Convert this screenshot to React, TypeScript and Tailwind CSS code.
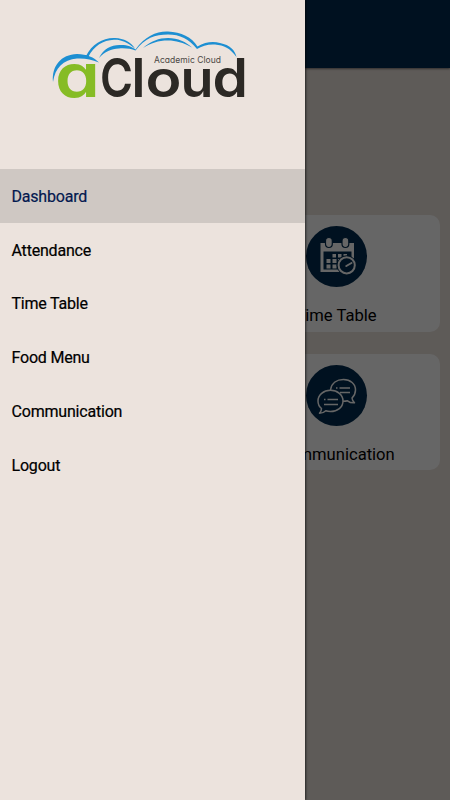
const menuItems = ['Dashboard', 'Attendance', 'Time Table', 'Food Menu', 'Communication', 'Logout'];

const Logo = () => (
  <svg width="200" height="84" viewBox="50 28 200 84" fill="none" className="ml-[50px] mt-7 overflow-visible">
    <g fill="#1d8fd2">
      <path d="M53 82C51.500 66 61 54.500 77 54C87 54 94 57.500 99 62.500C91 59.500 85 58 77 58.500C63 59.500 55 68 53 82Z" />
      <path d="M86 56C92 44 103 37.500 115 38C124 38.500 131 42 135 48.500C127 42 121 39.500 114 39.700C103 40 94 46 88.500 56.500Z" />
      <path d="M99 58C104 48 112 44.500 121 45C128 45 132 47 135.500 49.500C145 36 157 31 168 31.500C181 32 192 37 197.500 46.500C205 42 213 41 220 43C230 45 235 50 236.500 57C230 48 224 45.500 215 44.500C208 44 202 46 197 49C189 39 180 34.500 168 34.500C155 34.500 145 38 135.500 50.500C131 49 126 48 119 48.500C111 49 105 51.500 99 58Z" />
      <path d="M143 48C151 41 159 38 168 38C178 38 186 42 192 47.500C183 42.500 176 40.500 168 40.500C158 40.500 151 43 143 48Z" />
    </g>
    <text y="97" className="font-['Inter',sans-serif] font-semibold [font-feature-settings:'cv11']">
      <tspan x="55" fontSize="60" fill="#86bc25" textLength="45" lengthAdjust="spacingAndGlyphs">a</tspan>
      <tspan x="100" fontSize="54" fill="#2c2925" textLength="33" lengthAdjust="spacingAndGlyphs">C</tspan>
      <tspan x="131.500" fontSize="53" fill="#2c2925">l</tspan>
      <tspan x="145.500" fontSize="51" fill="#2c2925" textLength="36" lengthAdjust="spacingAndGlyphs">o</tspan>
      <tspan x="180.500" fontSize="51" fill="#2c2925" textLength="33" lengthAdjust="spacingAndGlyphs">u</tspan>
      <tspan x="212.500" fontSize="53" fill="#2c2925" textLength="35.500" lengthAdjust="spacingAndGlyphs">d</tspan>
    </text>
    <text
      x="154" y="62.500" fontSize="8.500" fill="#4b4744" textLength="67"
      className="font-['Inter',sans-serif] [font-feature-settings:'cv11']"
    >
      Academic Cloud
    </text>
  </svg>
);

const CalendarIcon = () => (
  <svg width="61" height="61" viewBox="0 0 61 61" fill="none">
    <path d="M14.500 17H48V46H14.500Z" fill="#fff" />
    <path d="M17.500 25.500H45.500V43.500H17.500Z" fill="#022c50" />
    <g fill="#fff" stroke="#022c50" strokeWidth="1.200">
      <rect x="19.500" y="11.500" width="6.800" height="10" rx="3.400" />
      <rect x="36" y="11.500" width="6.800" height="10" rx="3.400" />
    </g>
    <g fill="#fff">
      <path d="M26.500 28h3.500v3.500h-3.500zM32 28h3.500v3.500h-3.500zM37.500 28h3.500v3.500h-3.500z" />
      <path d="M20.500 33h4v4h-4zM26.500 33h4v4h-4zM32 33h3.500v4h-3.500z" />
      <path d="M20.500 38.500h4v4h-4zM26.500 38.500h4v4h-4z" />
    </g>
    <circle cx="40.700" cy="39.300" r="10" fill="#022c50" />
    <circle cx="40.700" cy="39.300" r="8.100" stroke="#fff" strokeWidth="2" />
    <path d="M40.300 40L45.500 37" stroke="#fff" strokeWidth="2" strokeLinecap="round" />
  </svg>
);

const ChatIcon = () => (
  <svg width="61" height="61" viewBox="0 0 61 61" fill="none" stroke="#fff" strokeWidth="1.500" strokeLinejoin="round">
    <path d="M24.500 25C25.500 18 31 14.500 37.500 14.500C44.500 14.500 49.500 19 49.500 25C49.500 28.500 48 31 46 33C46.200 35 47 36.500 48.500 37.800C45.500 38 43 37 41.500 35.800C40 36.300 38.500 36.300 37 36.300" />
    <path d="M24.500 25.300C31.500 25.300 37 29.800 37 36C37 42.200 31.500 46.500 24.500 46.500C22.800 46.500 21.200 46.300 19.800 45.800C18.300 47.300 16 48.300 13.500 48.300C14.800 46.800 15.500 45 15.500 43.500C13 41.500 12 39 12 36C12 29.800 17.500 25.300 24.500 25.300Z" />
    <path d="M30 23h1.500M33.500 23H44M34 27.500H44M18 34.500h1.500M21.500 34.500H32M18 39.500H32" />
  </svg>
);

const cards = [
  { label: 'Time Table', Icon: CalendarIcon },
  { label: 'Communication', Icon: ChatIcon },
];

export default function App() {
  return (
    <div className="relative h-[800px] w-[450px] overflow-hidden bg-[#ece3dd] font-['Roboto',sans-serif]">
      <header className="h-[68px] bg-[#022c50] shadow-[0_1px_2px_rgba(0,0,0,0.5)]" />
      <main className="grid grid-cols-2 gap-x-3.5 gap-y-[22px] px-2.5 pt-[147px]">
        {cards.map(({ label, Icon }) => (
          <div key={label} className="col-start-2 flex h-[116.500px] flex-col items-center rounded-[10px] bg-white pt-[11px]">
            <div className="size-[61px] rounded-full bg-[#022c50]">
              <Icon />
            </div>
            <span className="mt-[18px] text-[16.600px] leading-[22px] text-black">{label}</span>
          </div>
        ))}
      </main>

      <div className="absolute inset-0 bg-black/60" />

      <aside className="absolute inset-y-0 left-0 w-[305px] bg-[#ece3dd] shadow-[1px_0_2px_rgba(0,0,0,0.6)]">
        <div className="h-[169px]">
          <div className="flow-root">
            <Logo />
          </div>
        </div>
        <nav>
          {menuItems.map((item) => (
            <a
              key={item}
              className={`flex h-[53.800px] items-center px-[11.500px] pt-0.5 text-[16px] tracking-[-0.2px] [-webkit-text-stroke:0.2px] ${
                item === 'Dashboard' ? 'bg-[#cfc8c3] text-[#03194f]' : 'text-black'
              }`}
            >
              {item}
            </a>
          ))}
        </nav>
      </aside>
    </div>
  );
}
